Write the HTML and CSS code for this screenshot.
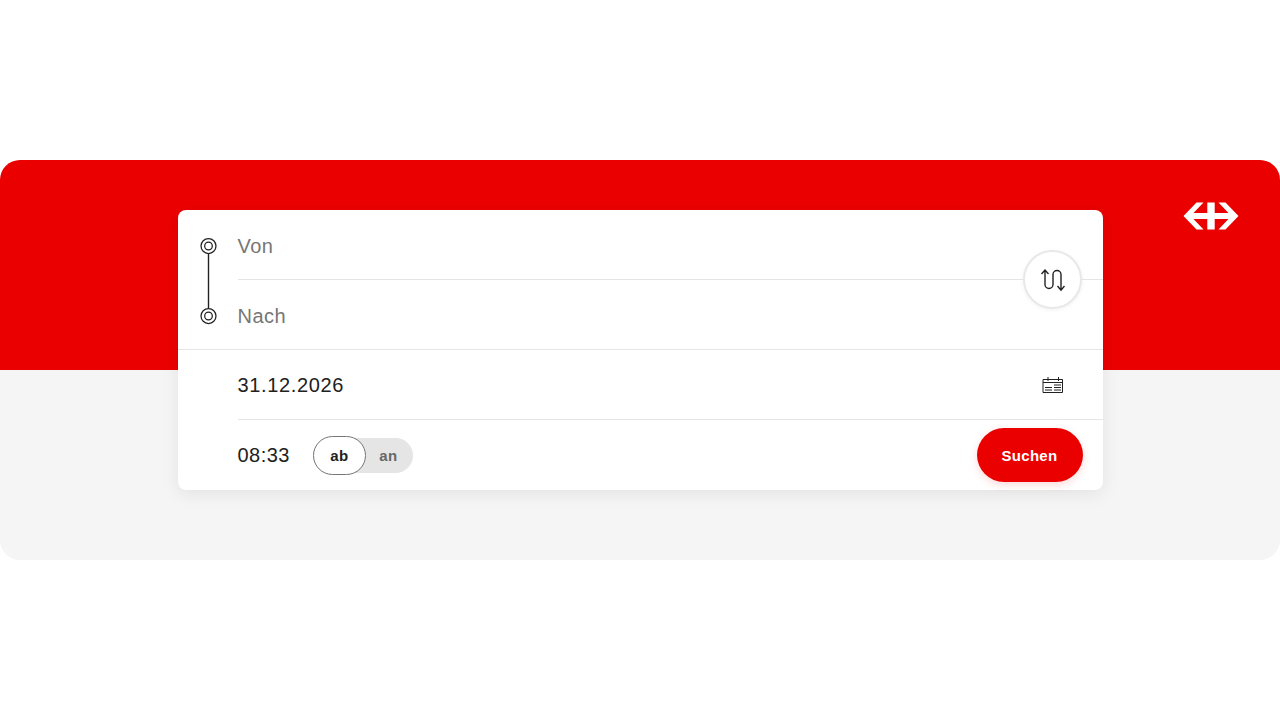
FILE: index.html
```html
<!DOCTYPE html>
<html lang="de">
<head>
<meta charset="utf-8">
<title>Fahrplan</title>
<link rel="stylesheet" href="styles.css">
</head>
<body>
<main class="stage">
  <svg class="logo" width="56" height="28" viewBox="-28 -14 56 28" aria-label="SBB"><path fill="#fff" d="M-27.5 0L-14.5 -13.5H-7.5L-17.5 -3H-3.7V-13.5H3.7V-3H17.5L7.5 -13.5H14.5L27.5 0L14.5 13.5H7.5L17.5 3H3.7V13.5H-3.7V3H-17.5L-7.5 13.5H-14.5Z"/></svg>
  <form class="card">
    <section class="route">
      <div class="rail">
        <svg width="20" height="88" viewBox="0 0 20 88" fill="none" stroke="#212121" stroke-width="1.25">
          <circle cx="9.5" cy="9" r="7.5"/><circle cx="9.5" cy="9" r="3.8"/>
          <path stroke-width="1.4" d="M9.5 17V71"/>
          <circle cx="9.5" cy="79" r="7.5"/><circle cx="9.5" cy="79" r="3.8"/>
        </svg>
      </div>
      <div class="fields">
        <div class="row row-line placeholder">Von</div>
        <div class="row placeholder">Nach</div>
      </div>
      <button type="button" class="swap" aria-label="Tauschen">
        <svg width="26" height="26" viewBox="0 0 26 26" fill="none" stroke="#212121" stroke-width="1.4">
          <path d="M2.5 7L6 3L9.5 7M6 3.2V17.5A4 4 0 0 0 14 17.5V7.5A4 4 0 0 1 22 7.5V23M18.5 19L22 23.2L25.5 19"/>
        </svg>
      </button>
    </section>
    <section class="when">
      <div class="row row-line date">
        <span class="value">31.12.2026</span>
        <svg class="cal" width="22" height="18" viewBox="0 0 22 18" fill="none" stroke="#212121">
          <path d="M1 3.5H20.5V16.5H1ZM1 6.5H20.5M6 1V5M16.5 1V5"/>
          <path d="M12 9H19M12 11.5H19M12 14H19M3 11.5H10M3 14H10" stroke-width="1.2"/>
        </svg>
      </div>
      <div class="row time">
        <span class="value">08:33</span>
        <div class="toggle">
          <span class="opt opt-on">ab</span>
          <span class="opt opt-off">an</span>
        </div>
        <button type="button" class="search">Suchen</button>
      </div>
    </section>
  </form>
</main>
</body>
</html>
```
FILE: styles.css
```css
* { box-sizing: border-box; }
html, body { margin: 0; height: 100%; background: #fff; }
body {
  padding-top: 160px;
  font-family: "Liberation Sans", Arial, sans-serif;
  color: #212121;
}
.stage {
  position: relative;
  height: 400px;
  padding-top: 50px;
  border-radius: 20px;
  background: linear-gradient(#eb0000 210px, #f5f5f5 210px);
}
.logo { position: absolute; top: 42px; left: 1183px; }
.card {
  position: relative;
  width: 925px;
  height: 280px;
  margin: 0 auto;
  border-radius: 8px;
  background: #fff;
  box-shadow: 0 4px 18px rgba(0, 0, 0, .08);
}
.route {
  position: relative;
  display: flex;
  height: 140px;
  border-bottom: 1px solid #e5e5e5;
}
.rail { width: 60px; padding: 27px 0 0 21px; }
.rail svg { display: block; }
.fields { flex: 1; }
.row {
  display: flex;
  align-items: center;
  height: 70px;
  font-size: 20px;
  letter-spacing: .45px;
}
.row-line { border-bottom: 1px solid #e5e5e5; }
.fields .row:last-child { height: 69px; }
.placeholder { color: #767676; padding-top: 3px; }
.swap {
  position: absolute;
  top: 40px;
  left: 845px;
  display: flex;
  align-items: center;
  justify-content: center;
  width: 59px;
  height: 59px;
  padding: 0;
  border: 2px solid #e8e8e8;
  border-radius: 50%;
  background: #fff;
  box-shadow: 0 1px 4px rgba(0, 0, 0, .06);
}
.when { padding-left: 60px; }
.date { justify-content: space-between; padding: 2px 39px 0 0; letter-spacing: .65px; }
.cal { display: block; margin-top: -2px; }
.time { padding-right: 20px; }
.toggle {
  display: flex;
  align-items: center;
  width: 100px;
  height: 35px;
  margin-left: 23px;
  border-radius: 18px;
  background: #e5e5e5;
  font-size: 15px;
  font-weight: 700;
  letter-spacing: .2px;
}
.opt { display: flex; align-items: center; justify-content: center; }
.opt-on {
  width: 53px;
  height: 39px;
  border: 1px solid #767676;
  border-radius: 20px;
  background: #fff;
}
.opt-off { width: 45px; color: #686868; }
.search {
  width: 106px;
  height: 54px;
  margin-left: auto;
  border: 0;
  border-radius: 27px;
  background: #eb0000;
  color: #fff;
  font: 700 15px "Liberation Sans", Arial, sans-serif;
  letter-spacing: .3px;
  box-shadow: 0 3px 8px rgba(235, 0, 0, .15);
}
```
